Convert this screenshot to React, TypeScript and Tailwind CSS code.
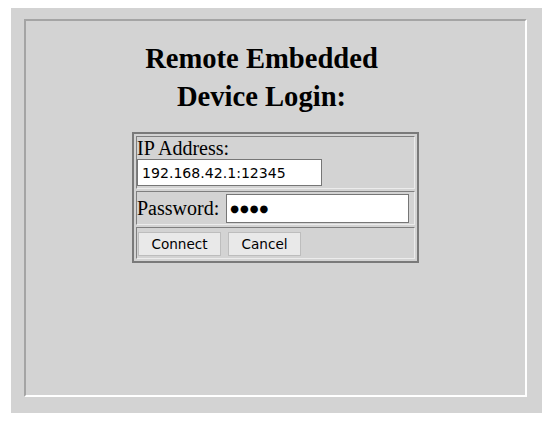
export default function App() {
  const serif = "font-['Liberation_Serif','Times_New_Roman',serif]";
  const sans = "font-['DejaVu_Sans','Verdana',sans-serif]";
  const cell =
    "border border-solid border-t-[#7f7f7f] border-l-[#7f7f7f] border-b-[#ececec] border-r-[#ececec]";
  return (
    <div className="min-h-[421px] bg-white pt-[8px] pl-[11px]">
      <div className="w-[531px] h-[405px] bg-[#d3d3d3] pt-[11px] pl-[13px] pr-[15px] pb-[16px]">
        <div className="h-full border-2 border-solid border-t-[#a4a4a4] border-l-[#a4a4a4] border-b-white border-r-white flex flex-col items-center">
          <h1
            className={`${serif} mt-[19px] pr-[28px] text-center text-[28.6px] leading-[38px] font-bold text-black`}
          >
            Remote Embedded
            <br />
            Device Login:
          </h1>
          <div className="mt-[16px] w-[287px] border-2 border-solid border-[#7a7a7a] p-[2px] flex flex-col gap-[2px] text-black">
            <div className={`${cell} h-[53px] flex flex-col pt-[1px]`}>
              <div className={`${serif} text-[20px] leading-[21px] pl-0`}>IP Address:</div>
              <input
                readOnly
                value="192.168.42.1:12345"
                className={`${sans} w-[185px] h-[27px] bg-white border border-solid border-[#767676] pl-[4px] text-[14.1px] text-black outline-none`}
              />
            </div>
            <div className={`${cell} h-[34px] flex items-center`}>
              <span className={`${serif} text-[20px] leading-[22px]`}>Password:</span>
              <div
                className={`${sans} ml-[7px] w-[183px] h-[29px] bg-white border border-solid border-[#767676] pl-[3px] flex items-center text-[10px] tracking-[1px] text-black`}
              >
                ●●●●
              </div>
            </div>
            <div className={`${cell} h-[32px] flex items-start pt-[4px] pl-[1px] gap-[7px]`}>
              <button
                className={`${sans} w-[83px] h-[24px] bg-[#e9e9e9] border border-solid border-[#bdbdbd] text-[13.6px] text-black flex items-center justify-center`}
              >
                Connect
              </button>
              <button
                className={`${sans} w-[73px] h-[24px] bg-[#e9e9e9] border border-solid border-[#bdbdbd] text-[13.6px] text-black flex items-center justify-center`}
              >
                Cancel
              </button>
            </div>
          </div>
        </div>
      </div>
    </div>
  );
}
